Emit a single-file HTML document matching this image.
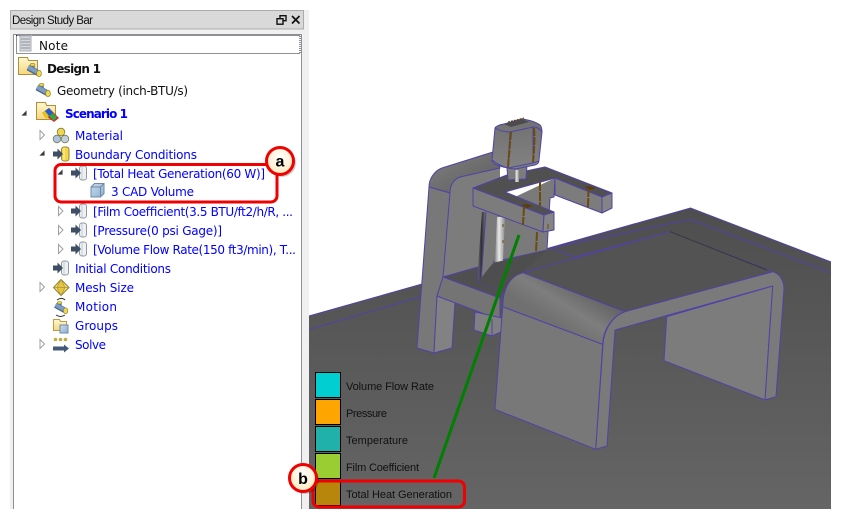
<!DOCTYPE html>
<html><head><meta charset="utf-8"><title>Design Study Bar</title>
<style>
html,body{margin:0;padding:0;background:#fff;width:841px;height:520px;overflow:hidden}
svg{display:block}
.t{font:12px "DejaVu Sans","Liberation Sans",sans-serif;fill:#0000ff}
.k{fill:#111}
.b{font-weight:bold}
.l{font:11px "Liberation Sans",sans-serif;fill:#111}
.m{stroke:#4f43a6;stroke-width:1;stroke-linejoin:round}
.n{fill:none;stroke:#4f43a6;stroke-width:1}
.br{fill:none;stroke:#6b4a10;stroke-width:2}
</style></head>
<body>
<svg width="841" height="520" viewBox="0 0 841 520" xmlns="http://www.w3.org/2000/svg">
<defs>
<linearGradient id="g" x1="0" y1="0" x2="0" y2="1"><stop offset="0" stop-color="#4e4e4e"/><stop offset="1" stop-color="#656565"/></linearGradient>
<linearGradient id="bandA" gradientUnits="userSpaceOnUse" x1="590" y1="290" x2="565" y2="330"><stop offset="0" stop-color="#626262"/><stop offset=".55" stop-color="#7e7e7e"/><stop offset="1" stop-color="#707070"/></linearGradient>
<linearGradient id="bandB" x1="0" y1="0" x2="1" y2="1"><stop offset="0" stop-color="#808080"/><stop offset="1" stop-color="#5c5c5c"/></linearGradient>
<linearGradient id="cyl" x1="0" y1="0" x2="1" y2="0"><stop offset="0" stop-color="#8c8c8c"/><stop offset=".4" stop-color="#e8e8e8"/><stop offset="1" stop-color="#8a8a8a"/></linearGradient>
<linearGradient id="dk" x1="0" y1="0" x2="1" y2="0"><stop offset="0" stop-color="#7a7a7a"/><stop offset=".5" stop-color="#2e2e2e"/><stop offset="1" stop-color="#7a7a7a"/></linearGradient>
<linearGradient id="head" x1="0" y1="0" x2="0" y2="1"><stop offset="0" stop-color="#707070"/><stop offset="1" stop-color="#828282"/></linearGradient>
<radialGradient id="cream" cx=".5" cy=".35" r=".7"><stop offset="0" stop-color="#ffffff"/><stop offset="1" stop-color="#ffe9b8"/></radialGradient>
<linearGradient id="fold" x1="0" y1="0" x2="0" y2="1"><stop offset="0" stop-color="#fff8d0"/><stop offset="1" stop-color="#f5d77a"/></linearGradient>
<linearGradient id="cub" x1="0" y1="0" x2="1" y2="1"><stop offset="0" stop-color="#c8dcef"/><stop offset="1" stop-color="#8fb0d0"/></linearGradient>

<symbol id="bcw" viewBox="0 0 16 16" overflow="visible">
<rect x="8.500" y="1" width="7" height="14" rx="2.500" fill="#eef1f4" stroke="#8f99a4"/>
<path d="M11 1.500v13" stroke="#c4cbd2" fill="none"/>
<path d="M0 5.500h4.500V2.500l5.500 5.500-5.500 5.500v-3H0z" fill="#3e4e64"/>
</symbol>
<symbol id="bcy" viewBox="0 0 16 16" overflow="visible">
<rect x="8.500" y="1" width="7.500" height="14" rx="2.500" fill="#f2d64c" stroke="#97862e"/>
<path d="M11 1.500v13" stroke="#fff2a0" fill="none"/>
<path d="M0 5.500h4.500V2.500l5.500 5.500-5.500 5.500v-3H0z" fill="#3e4e64"/>
</symbol>
<symbol id="pipe" viewBox="0 0 16 14" overflow="visible">
<path d="M6.500 5V2" stroke="#5f82ad" stroke-width="4.500" fill="none"/>
<path d="M2 4.500L12 10" stroke="#4f6a8c" stroke-width="6" fill="none"/>
<path d="M2 4L12 9.500" stroke="#7d9dc4" stroke-width="4" fill="none"/>
<ellipse cx="13" cy="10.500" rx="2.400" ry="3.200" fill="#f0d84a" stroke="#8e8030" stroke-width=".7"/>
<ellipse cx="6.500" cy="1.800" rx="2.500" ry="1.400" fill="#f0d84a" stroke="#8e8030" stroke-width=".6"/>
</symbol>
<symbol id="tri0" viewBox="0 0 6 10" overflow="visible"><path d="M.5 .5L5 5 .5 9.500z" fill="#fff" stroke="#a0a0a0"/></symbol>
<symbol id="tri1" viewBox="0 0 7 7" overflow="visible"><path d="M6.500 .5V6.500H.5z" fill="#3a3a3a"/></symbol>
</defs>

<!-- panel -->
<rect x="10" y="10" width="299" height="499" fill="#f0f0f0"/>
<rect x="10.500" y="10.500" width="293" height="18.500" fill="#d9d9d9" stroke="#ababab"/>
<text x="12" y="24" font-family="Liberation Sans,sans-serif" font-size="11.500" fill="#111" textLength="81" lengthAdjust="spacing">Design Study Bar</text>
<g fill="none" stroke="#111" stroke-width="1.400">
<rect x="280" y="15.700" width="6" height="5"/><rect x="277" y="18.700" width="6" height="5.500" fill="#d9d9d9"/>
<path d="M292 16l7.500 7.500M299.500 16l-7.500 7.500" stroke-width="1.700"/>
</g>
<rect x="13.500" y="34.500" width="288" height="480" fill="#fff" stroke="#8f8f99"/>
<rect x="10" y="509" width="300" height="11" fill="#fff"/>
<rect x="16.500" y="35.500" width="283.500" height="18" fill="none" stroke="#222" stroke-dasharray="1 1"/>

<!-- tree icons -->
<rect x="20" y="36" width="11" height="15" fill="#d4d8dd" stroke="#a9afb6"/>
<path d="M21 39h9M21 42h9M21 45h9M21 48h9" stroke="#8d939a"/>

<path d="M18.500 57.500h9l1 3h9v14h-19z" fill="url(#fold)" stroke="#b28d3c"/>
<use href="#pipe" x="26" y="63" width="16" height="14"/>
<use href="#pipe" x="35" y="83" width="16" height="14"/>

<use href="#tri1" x="21" y="110" width="6" height="6"/>
<path d="M36.500 102.500h9l1 3h9v14h-19z" fill="url(#fold)" stroke="#b28d3c"/>
<path d="M42 113 L49 108 L59 118 L54 122z" fill="#d9261c"/>
<path d="M45 111l4-3 4 5-4 3z" fill="#1f5fd0"/>
<path d="M42 113l3-2 4 5-3 3z" fill="#e8c020"/>
<path d="M49 116l4-3 4 4-3 4z" fill="#2ea84a"/>

<use href="#tri0" x="39.500" y="130" width="6" height="10"/>
<g stroke="#7d7a50" stroke-width=".8"><circle cx="61" cy="132" r="3.800" fill="#f0d84a"/><circle cx="57" cy="139" r="3.800" fill="#a9c3e0"/><circle cx="65" cy="139" r="3.800" fill="#c0cfe0"/></g>

<use href="#tri1" x="39" y="150" width="6" height="6"/>
<use href="#bcy" x="53" y="146" width="16" height="16"/>
<use href="#tri1" x="57" y="169" width="6" height="6"/>
<use href="#bcw" x="71" y="165" width="16" height="16"/>
<path d="M91 187l3.500-3.500h9.500v10l-3.500 3.500h-9.500z" fill="url(#cub)" stroke="#6f8aa6"/>
<path d="M91 187h9.500v10M100.500 187l3.500-3.500" fill="none" stroke="#6f8aa6"/>
<use href="#tri0" x="58" y="206" width="6" height="10"/>
<use href="#bcw" x="71" y="203" width="16" height="16"/>
<use href="#tri0" x="58" y="225" width="6" height="10"/>
<use href="#bcw" x="71" y="222" width="16" height="16"/>
<use href="#tri0" x="58" y="244" width="6" height="10"/>
<use href="#bcw" x="71" y="241" width="16" height="16"/>
<use href="#bcw" x="53" y="260" width="16" height="16"/>
<use href="#tri0" x="39.500" y="282" width="6" height="10"/>
<path d="M61 279.500L69 287.500 61 295.500 53.500 287.500z" fill="#f2dc70" stroke="#8e8030"/>
<path d="M53.500 287.500h15.500M61 279.500L57 287.500 61 295.500 65 287.500z" fill="#e8c640" stroke="#a8943c" stroke-width=".7"/>
<use href="#pipe" x="53" y="301" width="16" height="13"/>
<path d="M57 300c3-2 6-2 8 0M56 315c3 2 6 2 9 0" fill="none" stroke="#333"/>
<path d="M53.500 319.500h6l1 2h6v9h-13z" fill="url(#fold)" stroke="#c09a48"/>
<rect x="60" y="325" width="8" height="8" fill="url(#cub)" stroke="#6f8aa6"/>
<use href="#tri0" x="39.500" y="339" width="6" height="10"/>
<circle cx="55.500" cy="339.500" r="1.800" fill="#c2ad45"/><circle cx="60.500" cy="339.500" r="1.800" fill="#c2ad45"/><circle cx="65.500" cy="339.500" r="1.800" fill="#c2ad45"/>
<path d="M53 346.500h11v-2l5 4-5 4v-2H53z" fill="#44587a" stroke="none"/>

<!-- tree text -->
<text class="t k" x="39" y="50" textLength="29">Note</text>
<text class="t k b" x="47" y="73" textLength="54">Design 1</text>
<text class="t k" x="57" y="95" textLength="131">Geometry (inch-BTU/s)</text>
<text class="t b" x="65" y="118" textLength="63">Scenario 1</text>
<text class="t" x="75" y="140" textLength="48">Material</text>
<text class="t" x="75" y="159" textLength="122">Boundary Conditions</text>
<text class="t" x="93" y="178" textLength="172">[Total Heat Generation(60 W)]</text>
<text class="t" x="111" y="196" textLength="83">3 CAD Volume</text>
<text class="t" x="93" y="216" textLength="200">[Film Coefficient(3.5 BTU/ft2/h/R, ...</text>
<text class="t" x="93" y="235" textLength="129">[Pressure(0 psi Gage)]</text>
<text class="t" x="93" y="254" textLength="203">[Volume Flow Rate(150 ft3/min), T...</text>
<text class="t" x="75" y="273" textLength="96">Initial Conditions</text>
<text class="t" x="75" y="292" textLength="59">Mesh Size</text>
<text class="t" x="75" y="311" textLength="42">Motion</text>
<text class="t" x="75" y="330" textLength="43">Groups</text>
<text class="t" x="75" y="349" textLength="31">Solve</text>

<!-- viewport -->
<rect x="309" y="10" width="532" height="499" fill="#fff"/>
<rect x="831" y="200" width="10" height="320" fill="#fff"/>
<path d="M309 316L690.500 208 831 262V509H309z" fill="url(#g)"/>
<path d="M309 316L690.500 208 831 262" class="n"/>
<path d="M309 329.500L420 297M550 248L690.500 219.500 831 272.700" class="n"/>
<path d="M550 248L575 257 670 231.700" class="n"/>

<!-- chair upright -->
<path d="M493 152L442 168C434 171 429 179 429 187L417 348 434 353 452 348 455 302 443 277 478 267 500 270V160z" fill="#7c7c7c"/>
<path d="M429 187C429 179 434 171 442 168L493 152 500 168 460 177C454 179 450 185 450 193z" fill="url(#bandB)" class="m"/>
<path d="M429 187L450 193 443 277 437 296 434 353 417 348z" fill="#787878" class="m"/>
<path d="M437 296L455 302 452 348 434 353z" fill="#828282" class="m"/>
<!-- column -->
<path d="M483 212L555 178 554 197 550 198 547 250 493 263 478 282z" fill="#7a7a7a"/>
<path d="M482 212L477 282 481 282 486 212z" fill="url(#dk)"/>
<path d="M486 212L481 282M493 262L547 250" class="n"/>
<path d="M497 217L505 217 503 261 495 262z" fill="url(#cyl)"/>
<path d="M555 178L554 197 550 198 547 250" class="n"/>
<!-- seat -->
<path d="M443 277L478 267 478 282 505 292 500 298z" fill="#4f4f4f" class="m"/>
<path d="M493 263L547 250 523 272 505 292 478 282z" fill="#4e4e4e"/>
<path d="M443 277L500 298 500 320 437 296z" fill="#747474" class="m"/>
<path d="M475 312L474 330 492 336 501 332 502 318z" fill="#808080" class="m"/>
<path d="M492 336L492 319" class="n"/>
<!-- arms -->
<path d="M473 188L507 175 545 167 612 193 602 197 555 178 505 192 554 212 544 215z" fill="#505050" class="m"/>
<path d="M555 178L602 197 602 213 555 195z" fill="#7c7c7c" class="m"/>
<path d="M602 197L612 193 612 208 602 213z" fill="#848484" class="m"/>
<path d="M473 188L544 215 543 232 473 206z" fill="#7c7c7c" class="m"/>
<path d="M544 215L554 212 554 230 543 232z" fill="#848484" class="m"/>
<path d="M524 207L523 225M588.500 188L588 207M540 182L540 207M537 232L536 252" class="br" stroke-dasharray="9 1"/>
<path d="M521 205l6-1 6 2-6 2z" fill="#5a3d0a"/>
<path d="M585 187l5-1 6 2-6 2z" fill="#5a3d0a"/>
<path d="M548 224v5M503 224v3M503 240v3" stroke="#6b4a10" stroke-width="1" fill="none"/>
<!-- neck & head -->
<path d="M507 168L527 165 526 179 508 180z" fill="#7c7c7c" class="m"/>
<path d="M515 170h4v12h-4z" fill="url(#cyl)"/>
<path d="M495 128Q497 125 504 124L522 119Q535 121 540 125Q542 127 542 132L539 160Q539 164 535 165L515 169Q505 168 497 165Q492 163 492 160z" fill="url(#head)" class="m"/>
<path d="M504 124L522 119 529 122 511 127z" fill="#4c4c4c"/>
<path d="M495 128Q502 132 510 132L533 127Q539 127 542 132M510 132L508 168M533 127L533 163" class="n"/>
<path d="M492 160Q500 166 508 168L533 163 539 161" class="n"/>
<path d="M511 132C510 142 509 155 508 167M534 128C535 140 534 150 533 162" class="br" stroke-dasharray="8 1"/>
<path d="M508 122l16-4" stroke="#5a3d0a" stroke-dasharray="2 1" fill="none"/>

<!-- desk -->
<path d="M523 272.700L670 231.700 773 271.700 625 311.700z" fill="#535353" class="m"/>
<path d="M670 231.700L767 270" stroke="#383838" fill="none"/>
<path d="M666.700 316.700L772.700 286 765 400 664 360.700z" fill="#7c7c7c" class="m"/>
<path d="M625 311.700L773 271.700C780 274 784 281 784 289L776 396.700 765 400 772.700 286 615 330 607 446 595.700 449.300 603 344C604 330 612 316 625 311.700z" fill="#7a7a7a" class="m"/>
<path d="M502.700 306.700L602.700 344.300 595.700 449.300 495 409.300z" fill="#787878" class="m"/>
<path d="M523 272.700C510 276 503 288 502.700 306.700L602.700 344.300C603 330 612 316 625 311.700z" fill="url(#bandA)" class="m"/>

<!-- green leader -->
<line x1="519" y1="235" x2="434" y2="478" stroke="#008000" stroke-width="3"/>

<!-- legend -->
<g stroke="#000" stroke-width="1">
<rect x="315.500" y="372.500" width="25" height="25" fill="#00ced1"/>
<rect x="315.500" y="399.500" width="25" height="25" fill="#ffa500"/>
<rect x="315.500" y="426.500" width="25" height="25" fill="#20b2aa"/>
<rect x="315.500" y="453.500" width="25" height="25" fill="#9acd32"/>
<rect x="315.500" y="480.500" width="25" height="25" fill="#b8860b"/>
</g>
<text class="l" x="346" y="390" textLength="88">Volume Flow Rate</text>
<text class="l" x="346" y="417" textLength="41">Pressure</text>
<text class="l" x="346" y="444" textLength="62">Temperature</text>
<text class="l" x="346" y="471" textLength="73">Film Coefficient</text>
<text class="l" x="346" y="498" textLength="106">Total Heat Generation</text>

<!-- callouts -->
<rect x="55" y="164.500" width="222" height="37.500" rx="6" fill="none" stroke="#f00000" stroke-width="3"/>
<rect x="313" y="481" width="151.500" height="26" rx="6" fill="none" stroke="#f00000" stroke-width="3"/>
<circle cx="282" cy="163" r="14" fill="#000" opacity=".2"/>
<circle cx="280" cy="161" r="13.500" fill="url(#cream)" stroke="#f00000" stroke-width="3"/>
<text x="280" y="166.500" text-anchor="middle" font-family="Liberation Sans,sans-serif" font-weight="bold" font-size="16" fill="#000">a</text>
<circle cx="305" cy="480" r="14" fill="#000" opacity=".2"/>
<circle cx="303" cy="478" r="13.500" fill="url(#cream)" stroke="#f00000" stroke-width="3"/>
<text x="303" y="484" text-anchor="middle" font-family="Liberation Sans,sans-serif" font-weight="bold" font-size="16" fill="#000">b</text>
</svg>
</body></html>
